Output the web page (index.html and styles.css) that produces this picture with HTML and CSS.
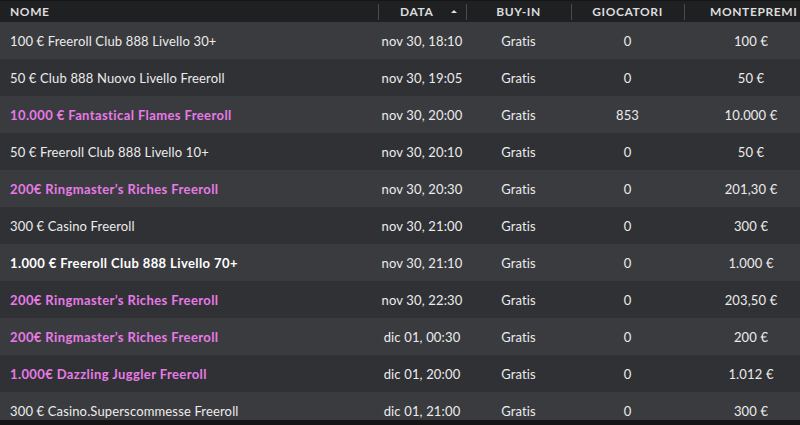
FILE: index.html
```html
<!DOCTYPE html>
<html lang="it">
<head>
<meta charset="utf-8">
<link rel="stylesheet" href="styles.css">
</head>
<body>
<div class="table">
  <div class="row head">
    <div class="c name">NOME</div>
    <div class="c date sort">DATA<span class="arrow"></span></div>
    <div class="c buy">BUY-IN</div>
    <div class="c players">GIOCATORI</div>
    <div class="c prize">MONTEPREMI</div>
  </div>
  <div class="row"><div class="c name">100 € Freeroll Club 888 Livello 30+</div><div class="c date">nov 30, 18:10</div><div class="c buy">Gratis</div><div class="c players">0</div><div class="c prize">100 €</div></div>
  <div class="row"><div class="c name">50 € Club 888 Nuovo Livello Freeroll</div><div class="c date">nov 30, 19:05</div><div class="c buy">Gratis</div><div class="c players">0</div><div class="c prize">50 €</div></div>
  <div class="row promo"><div class="c name">10.000 € Fantastical Flames Freeroll</div><div class="c date">nov 30, 20:00</div><div class="c buy">Gratis</div><div class="c players">853</div><div class="c prize">10.000 €</div></div>
  <div class="row"><div class="c name">50 € Freeroll Club 888 Livello 10+</div><div class="c date">nov 30, 20:10</div><div class="c buy">Gratis</div><div class="c players">0</div><div class="c prize">50 €</div></div>
  <div class="row promo"><div class="c name">200€ Ringmaster’s Riches Freeroll</div><div class="c date">nov 30, 20:30</div><div class="c buy">Gratis</div><div class="c players">0</div><div class="c prize">201,30 €</div></div>
  <div class="row"><div class="c name">300 € Casino Freeroll</div><div class="c date">nov 30, 21:00</div><div class="c buy">Gratis</div><div class="c players">0</div><div class="c prize">300 €</div></div>
  <div class="row bold"><div class="c name">1.000 € Freeroll Club 888 Livello 70+</div><div class="c date">nov 30, 21:10</div><div class="c buy">Gratis</div><div class="c players">0</div><div class="c prize">1.000 €</div></div>
  <div class="row promo"><div class="c name">200€ Ringmaster’s Riches Freeroll</div><div class="c date">nov 30, 22:30</div><div class="c buy">Gratis</div><div class="c players">0</div><div class="c prize">203,50 €</div></div>
  <div class="row promo"><div class="c name">200€ Ringmaster’s Riches Freeroll</div><div class="c date">dic 01, 00:30</div><div class="c buy">Gratis</div><div class="c players">0</div><div class="c prize">200 €</div></div>
  <div class="row promo"><div class="c name">1.000€ Dazzling Juggler Freeroll</div><div class="c date">dic 01, 20:00</div><div class="c buy">Gratis</div><div class="c players">0</div><div class="c prize">1.012 €</div></div>
  <div class="row"><div class="c name">300 € Casino.Superscommesse Freeroll</div><div class="c date">dic 01, 21:00</div><div class="c buy">Gratis</div><div class="c players">0</div><div class="c prize">300 €</div></div>
</div>
</body>
</html>
```
FILE: styles.css
```css
html, body {
  margin: 0;
  padding: 0;
  background: #141415;
  overflow: hidden;
}
.table {
  width: 800px;
  height: 420px;
  overflow: hidden;
  font-family: Lato, "Noto Sans", sans-serif;
  font-size: 13px;
  letter-spacing: 0.15px;
  color: #ececec;
}
.row {
  display: grid;
  grid-template-columns: 378px 88px 105px 113px 134px;
  height: 37px;
  align-items: center;
  background: #303134;
  width: 818px;
}
.row:nth-child(even) {
  background: #3a3b3f;
}
.row.head {
  height: 22px;
  background: #1f2022;
  border-top: 1px solid #151516;
  box-sizing: border-box;
  font-size: 12px;
  font-weight: 700;
  letter-spacing: 0.6px;
  color: #dcdcdc;
}
.c {
  text-align: center;
  white-space: nowrap;
}
.c.name {
  text-align: left;
  padding-left: 10px;
}
.head .c {
  position: relative;
  height: 100%;
  display: flex;
  align-items: center;
  justify-content: center;
}
.head .c.name {
  justify-content: flex-start;
}
.head .c.prize {
  justify-content: flex-start;
  padding-left: 26px;
}
.head .c + .c::before {
  content: "";
  position: absolute;
  left: 0;
  top: 3px;
  bottom: 2px;
  width: 1px;
  background: #4a4b4e;
}
.head .sort {
  justify-content: flex-start;
  padding-left: 22px;
}
.arrow {
  position: absolute;
  left: 73px;
  top: 9px;
  width: 0;
  height: 0;
  border-left: 3px solid transparent;
  border-right: 3px solid transparent;
  border-bottom: 3px solid #e0e0e0;
}
.promo {
  color: #e87ae8;
  font-weight: 700;
  letter-spacing: 0.4px;
}
.bold {
  font-weight: 700;
  color: #ffffff;
  letter-spacing: 0.4px;
}
.bold .c:not(.name), .promo .c:not(.name) {
  font-weight: 400;
  color: #ececec;
  letter-spacing: 0.15px;
}
```
